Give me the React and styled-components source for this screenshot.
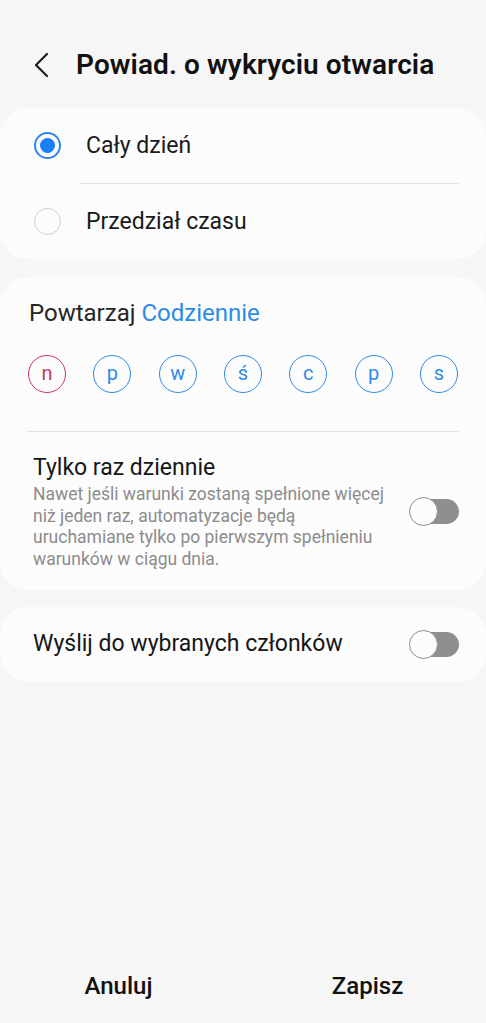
import React from "react"
import styled, { createGlobalStyle } from "styled-components"

const GlobalStyle = createGlobalStyle`
  html, body {
    margin: 0;
    padding: 0;
    background: #f6f6f6;
    font-family: Roboto, "Noto Sans", sans-serif;
  }
`

const days = [
  { letter: "n", sunday: true },
  { letter: "p" },
  { letter: "w" },
  { letter: "ś" },
  { letter: "c" },
  { letter: "p" },
  { letter: "s" },
]

const App = () => {
  return (
    <Page>
      <GlobalStyle />
      <Header>
        <BackButton>
          <svg width="18" height="26" viewBox="0 0 18 26" fill="none">
            <path d="M14 2 L3 13 L14 24" stroke="#1c1c1c" strokeWidth="2.2" strokeLinecap="round" strokeLinejoin="round" />
          </svg>
        </BackButton>
        <Title>Powiad. o wykryciu otwarcia</Title>
      </Header>

      <Card>
        <RadioRow>
          <Radio checked />
          <RadioLabel>Cały dzień</RadioLabel>
        </RadioRow>
        <RadioDivider />
        <RadioRow>
          <Radio />
          <RadioLabel>Przedział czasu</RadioLabel>
        </RadioRow>
      </Card>

      <Card gap="18px">
        <RepeatLine>
          Powtarzaj <Accent>Codziennie</Accent>
        </RepeatLine>
        <DaysRow>
          {days.map((d, i) => (
            <Day key={i} sunday={d.sunday}>{d.letter}</Day>
          ))}
        </DaysRow>
        <CardDivider />
        <SwitchRow>
          <SwitchText>
            <SwitchTitle>Tylko raz dziennie</SwitchTitle>
            <SwitchDesc>
              Nawet jeśli warunki zostaną spełnione więcej niż jeden raz, automatyzacje będą uruchamiane tylko po pierwszym spełnieniu warunków w ciągu dnia.
            </SwitchDesc>
          </SwitchText>
          <Toggle />
        </SwitchRow>
      </Card>

      <Card gap="17px">
        <SimpleRow>
          <SwitchTitle>Wyślij do wybranych członków</SwitchTitle>
          <Toggle />
        </SimpleRow>
      </Card>

      <Footer>
        <FooterButton>Anuluj</FooterButton>
        <FooterButton>Zapisz</FooterButton>
      </Footer>
    </Page>
  )
}

export default App

const Page = styled.div`
  width: 486px;
  height: 1023px;
  display: flex;
  flex-direction: column;
  background: #f6f6f6;
  overflow: hidden;
`

const Header = styled.div`
  height: 108px;
  display: flex;
  align-items: flex-start;
  padding: 48px 0 0 33px;
  box-sizing: border-box;
`

const BackButton = styled.div`
  width: 43px;
  height: 34px;
  display: flex;
  align-items: center;
`

const Title = styled.h1`
  margin: 0;
  font-size: 28px;
  font-weight: 600;
  color: #111;
  line-height: 34px;
  letter-spacing: 0.1px;
  white-space: nowrap;
`

const Card = styled.div`
  margin-top: ${p => p.gap || "0"};
  background: #fcfcfc;
  border-radius: 28px;
  display: flex;
  flex-direction: column;
`

const RadioRow = styled.div`
  height: 75px;
  display: flex;
  align-items: center;
  padding-left: 34px;
`

const Radio = styled.span`
  width: 27px;
  height: 27px;
  border-radius: 50%;
  box-sizing: border-box;
  border: ${p => p.checked ? "2px solid #2f86ea" : "1.5px solid #cfcfcf"};
  display: flex;
  align-items: center;
  justify-content: center;
  margin-right: 25px;
  &::after {
    content: "";
    display: ${p => p.checked ? "block" : "none"};
    width: 15px;
    height: 15px;
    border-radius: 50%;
    background: #1a7ff6;
  }
`

const RadioLabel = styled.span`
  font-size: 23px;
  color: #1a1a1a;
`

const RadioDivider = styled.div`
  height: 1px;
  background: #e2e2e2;
  margin: 0 27px 0 80px;
`

const RepeatLine = styled.div`
  padding: 22px 0 0 29px;
  font-size: 24px;
  line-height: 28px;
  color: #262626;
`

const Accent = styled.span`
  color: #2b8be6;
`

const DaysRow = styled.div`
  display: flex;
  justify-content: space-between;
  padding: 28px 28px 0 28px;
`

const Day = styled.div`
  width: 38px;
  height: 38px;
  box-sizing: border-box;
  border-radius: 50%;
  border: 1.5px solid ${p => p.sunday ? "#c9384f" : "#2e8be6"};
  color: ${p => p.sunday ? "#c9384f" : "#2e8be6"};
  font-size: 20px;
  display: flex;
  align-items: center;
  justify-content: center;
  line-height: 1;
  padding-bottom: 2px;
`

const CardDivider = styled.div`
  height: 1px;
  background: #e2e2e2;
  margin: 38px 27px 0 27px;
`

const SwitchRow = styled.div`
  display: flex;
  align-items: center;
  padding: 21px 27px 19px 33px;
`

const SwitchText = styled.div`
  flex: 1;
  display: flex;
  flex-direction: column;
  padding-right: 18px;
`

const SwitchTitle = styled.div`
  font-size: 23px;
  line-height: 30px;
  color: #161616;
`

const SwitchDesc = styled.div`
  font-size: 17.5px;
  line-height: 21.7px;
  color: #8c8c8c;
  margin-top: 1px;
`

const SimpleRow = styled.div`
  height: 75px;
  display: flex;
  align-items: center;
  justify-content: space-between;
  padding: 0 27px 0 33px;
`

const Toggle = styled.div`
  position: relative;
  flex-shrink: 0;
  width: 49px;
  height: 25px;
  border-radius: 13px;
  background: #8f8f8f;
  &::before {
    content: "";
    position: absolute;
    left: -1px;
    top: -2px;
    width: 29px;
    height: 29px;
    box-sizing: border-box;
    border-radius: 50%;
    background: #fcfcfc;
    border: 1.5px solid #8f8f8f;
  }
`

const Footer = styled.div`
  margin-top: auto;
  display: flex;
  gap: 12px;
  padding-bottom: 22px;
`

const FooterButton = styled.div`
  flex: 1;
  text-align: center;
  font-size: 24px;
  font-weight: 500;
  color: #111;
  line-height: 30px;
`
